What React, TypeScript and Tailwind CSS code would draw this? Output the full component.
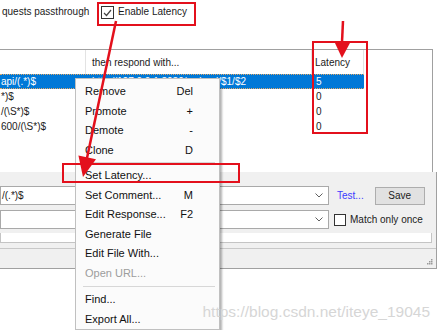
import React from "react";

function Chevron() {
  return (
    <svg width="8" height="5" viewBox="0 0 8 5" className="block">
      <path d="M0.5 0.5 L4 4 L7.5 0.5" fill="none" stroke="#606060" strokeWidth="1" />
    </svg>
  );
}

function MenuItem({ label, shortcut, disabled }: { label: string; shortcut?: string; disabled?: boolean }) {
  return (
    <div className={`flex h-[19.5px] items-center pl-[9px] pr-[26px] text-[11px] ${disabled ? "text-[#9d9d9d]" : "text-[#111]"}`}>
      <span className="flex-1 whitespace-nowrap">{label}</span>
      {shortcut && <span className="whitespace-nowrap text-right">{shortcut}</span>}
    </div>
  );
}

function Sep({ h }: { h: string }) {
  return (
    <div className={`flex ${h} items-center pl-[7px] pr-[4px]`}>
      <div className="h-px w-full bg-[#d7d7d7]" />
    </div>
  );
}

export default function App() {
  const rows = [
    { a: "api/(.*)$", b: "http://127.0.0.1:8080/webapi/$1/$2", c: "5", sel: true },
    { a: "*)$", b: "", c: "0" },
    { a: "/(\\S*)$", b: "", c: "0" },
    { a: "600/(\\S*)$", b: "", c: "0" },
  ];
  return (
    <div className="relative h-[330px] w-[440px] overflow-hidden bg-white font-['Liberation_Sans',Arial,sans-serif] text-[10px] text-[#1b1b1b]">
      {/* top bar */}
      <div className="flex h-[49px] items-start pt-[5px]">
        <span className="w-[101px] whitespace-nowrap pl-[2px] leading-[14px]">quests passthrough</span>
        <span className="mt-[1px] flex h-[13px] w-[13px] items-center justify-center border border-[#333] bg-white">
          <svg width="9" height="8" viewBox="0 0 9 8">
            <path d="M1 4 L3.5 6.5 L8 1" fill="none" stroke="#444" strokeWidth="1.2" />
          </svg>
        </span>
        <span className="ml-[4px] whitespace-nowrap leading-[14px]">Enable Latency</span>
      </div>

      {/* table */}
      <div className="h-[123px] w-[433px] border-r border-t border-[#a0a0a0] bg-white">
        <div className="flex h-[24px]">
          <div className="w-[86px] border-r border-[#e3e3e3]" />
          <div className="flex w-[226px] items-center border-r border-[#e3e3e3] pl-[6px]">then respond with...</div>
          <div className="flex w-[52px] items-center border-r border-[#e3e3e3] pl-[3px]">Latency</div>
        </div>
        {rows.map((r, i) => (
          <div
            key={i}
            className={`flex h-[15px] w-[364px] items-center whitespace-nowrap ${r.sel ? "border-y border-dotted border-[#e0a868] bg-[#0078d7] text-white" : ""}`}
          >
            <div className="w-[86px] overflow-hidden pl-[1px]">{r.a}</div>
            <div className="w-[226px] overflow-hidden pl-[6px]">{r.b}</div>
            <div className="w-[52px] pl-[4px]">{r.c}</div>
          </div>
        ))}
      </div>

      {/* lower panel */}
      <div className="h-[97px] w-[437px] border-b border-r border-[#a0a0a0] bg-[#f0f0f0] pt-[14px]">
        <div className="flex h-[19px] items-center">
          <div className="flex h-[19px] w-[329px] items-center border border-[#a9a9a9] bg-white">
            <span className="flex-1 pl-[1px]">/(.*)$</span>
            <span className="mr-[5px]"><Chevron /></span>
          </div>
          <span className="ml-[8px] text-[#3b3bff]">Test...</span>
          <div className="ml-[11px] flex h-[18px] w-[50px] items-center justify-center border border-[#adadad] bg-[#e1e1e1]">Save</div>
        </div>
        <div className="mt-[5px] flex h-[19px] items-center">
          <div className="flex h-[19px] w-[329px] items-center border border-[#a9a9a9] bg-white">
            <span className="flex-1" />
            <span className="mr-[5px]"><Chevron /></span>
          </div>
          <span className="ml-[5px] h-[12px] w-[12px] border border-[#333] bg-white" />
          <span className="ml-[4px] whitespace-nowrap">Match only once</span>
        </div>
        <div className="mt-[4px] h-[10px] w-[432px] border border-t-0 border-[#c4c4c4] bg-white" />
        <div className="mt-[5px] flex h-[20px] items-end justify-end border-t border-[#c8c8c8] pb-[3px] pr-[3px]">
          <svg width="6" height="6" viewBox="0 0 6 6">
            <rect x="4" y="0" width="1.5" height="1.5" fill="#9a9a9a" />
            <rect x="2" y="2" width="1.5" height="1.5" fill="#9a9a9a" />
            <rect x="4" y="2" width="1.5" height="1.5" fill="#9a9a9a" />
            <rect x="0" y="4" width="1.5" height="1.5" fill="#9a9a9a" />
            <rect x="2" y="4" width="1.5" height="1.5" fill="#9a9a9a" />
            <rect x="4" y="4" width="1.5" height="1.5" fill="#9a9a9a" />
          </svg>
        </div>
      </div>

      {/* context menu */}
      <div className="absolute left-[75px] top-[78px] h-[252px] w-[145px] border border-[#c0c0c0] bg-[#fbfbfb] pt-[2.5px] shadow-[3px_9px_2px_-1px_rgba(0,0,0,0.3)]">
        <MenuItem label="Remove" shortcut="Del" />
        <MenuItem label="Promote" shortcut="+" />
        <MenuItem label="Demote" shortcut="-" />
        <MenuItem label="Clone" shortcut="D" />
        <Sep h="h-[6px]" />
        <MenuItem label="Set Latency..." />
        <MenuItem label="Set Comment..." shortcut="M" />
        <MenuItem label="Edit Response..." shortcut="F2" />
        <MenuItem label="Generate File" />
        <MenuItem label="Edit File With..." />
        <MenuItem label="Open URL..." disabled />
        <Sep h="h-[7px]" />
        <MenuItem label="Find..." />
        <MenuItem label="Export All..." />
      </div>

      {/* watermark */}
      <div className="absolute right-[10px] top-[302px] whitespace-nowrap text-[15.5px] leading-[20px] text-[#d6d6d6]">
        https://blog.csdn.net/iteye_19045
      </div>

      {/* red annotations */}
      <div className="absolute left-[97px] top-[2px] h-[24px] w-[99px] border-2 border-[#e3101c]" />
      <div className="absolute left-[312px] top-[41px] h-[93px] w-[56px] border-2 border-[#e3101c]" />
      <div className="absolute left-[62px] top-[163px] h-[20px] w-[178px] border-2 border-[#e3101c]" />
      <svg className="pointer-events-none absolute left-0 top-0" width="440" height="330" viewBox="0 0 440 330">
        <line x1="116" y1="21" x2="87" y2="158" stroke="#e3101c" strokeWidth="2.5" />
        <polygon points="96,159.3 78.4,155.5 83,177" fill="#e3101c" />
        <line x1="343" y1="21" x2="342" y2="42" stroke="#e3101c" strokeWidth="2.5" />
        <polygon points="334,41 351,41 342,58" fill="#e3101c" />
      </svg>
    </div>
  );
}
